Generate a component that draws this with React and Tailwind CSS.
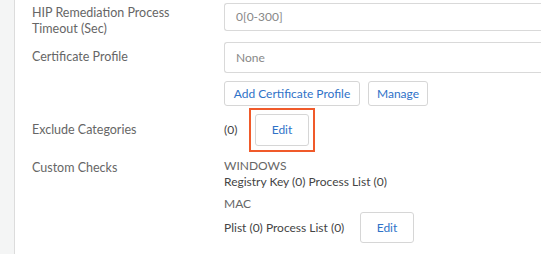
import React from 'react';

const Label = ({ children, className = '' }) => (
  <div className={`w-[208px] shrink-0 pl-4 text-[12.5px] leading-4 text-[#666] ${className}`}>{children}</div>
);

const Button = ({ children, className = '' }) => (
  <button className={`rounded-[3px] border border-[#d6d6d6] bg-white text-[12px] text-[#2f72c8] ${className}`}>
    {children}
  </button>
);

export default function App() {
  return (
    <div className="flex h-[254px] w-[541px] overflow-hidden bg-white" style={{ fontFamily: 'Lato, "Open Sans", sans-serif' }}>
      <div className="w-[15px] shrink-0 border-r border-[#dcdcdc] bg-[#f4f5f5]" />
      <div className="flex min-w-0 flex-1 flex-col pl-[1px]">
        <div className="flex h-[37px] items-start pt-[3px]">
          <Label className="pt-[2px]">
            HIP Remediation Process
            <br />
            Timeout (Sec)
          </Label>
          <div className="flex h-[28px] flex-1 items-center rounded-l-[3px] border border-r-0 border-[#d9d9d9] pl-[11px] text-[12px] text-[#888]">
            0[0-300]
          </div>
        </div>

        <div className="flex pt-[5px]">
          <Label className="pt-[7px]">Certificate Profile</Label>
          <div className="flex flex-1 flex-col">
            <div className="flex h-[31px] items-center rounded-l-[3px] border border-r-0 border-[#d9d9d9] pl-[11px] text-[12px] text-[#888]">
              None
            </div>
            <div className="flex gap-[8px] pt-[8px]">
              <Button className="h-[25px] w-[136px]">Add Certificate Profile</Button>
              <Button className="h-[25px] w-[60px]">Manage</Button>
            </div>
          </div>
        </div>

        <div className="flex items-center pt-[2px]">
          <Label>Exclude Categories</Label>
          <div className="flex items-center">
            <span className="w-[25px] text-[12px] text-[#444]">(0)</span>
            <div className="border-2 border-[#f05a2a] p-[4px]">
              <Button className="block h-[32px] w-[54px]">Edit</Button>
            </div>
          </div>
        </div>

        <div className="flex pt-[6px]">
          <Label className="pt-[2px]">Custom Checks</Label>
          <div className="flex flex-col text-[12px] leading-4">
            <div className="text-[#666]">WINDOWS</div>
            <div className="text-[#444]">Registry Key (0) Process List (0)</div>
            <div className="pt-[6px] text-[#666]">MAC</div>
            <div className="flex items-center">
              <span className="w-[136px] text-[#444]">Plist (0) Process List (0)</span>
              <Button className="h-[31px] w-[54px]">Edit</Button>
            </div>
          </div>
        </div>
      </div>
    </div>
  );
}
